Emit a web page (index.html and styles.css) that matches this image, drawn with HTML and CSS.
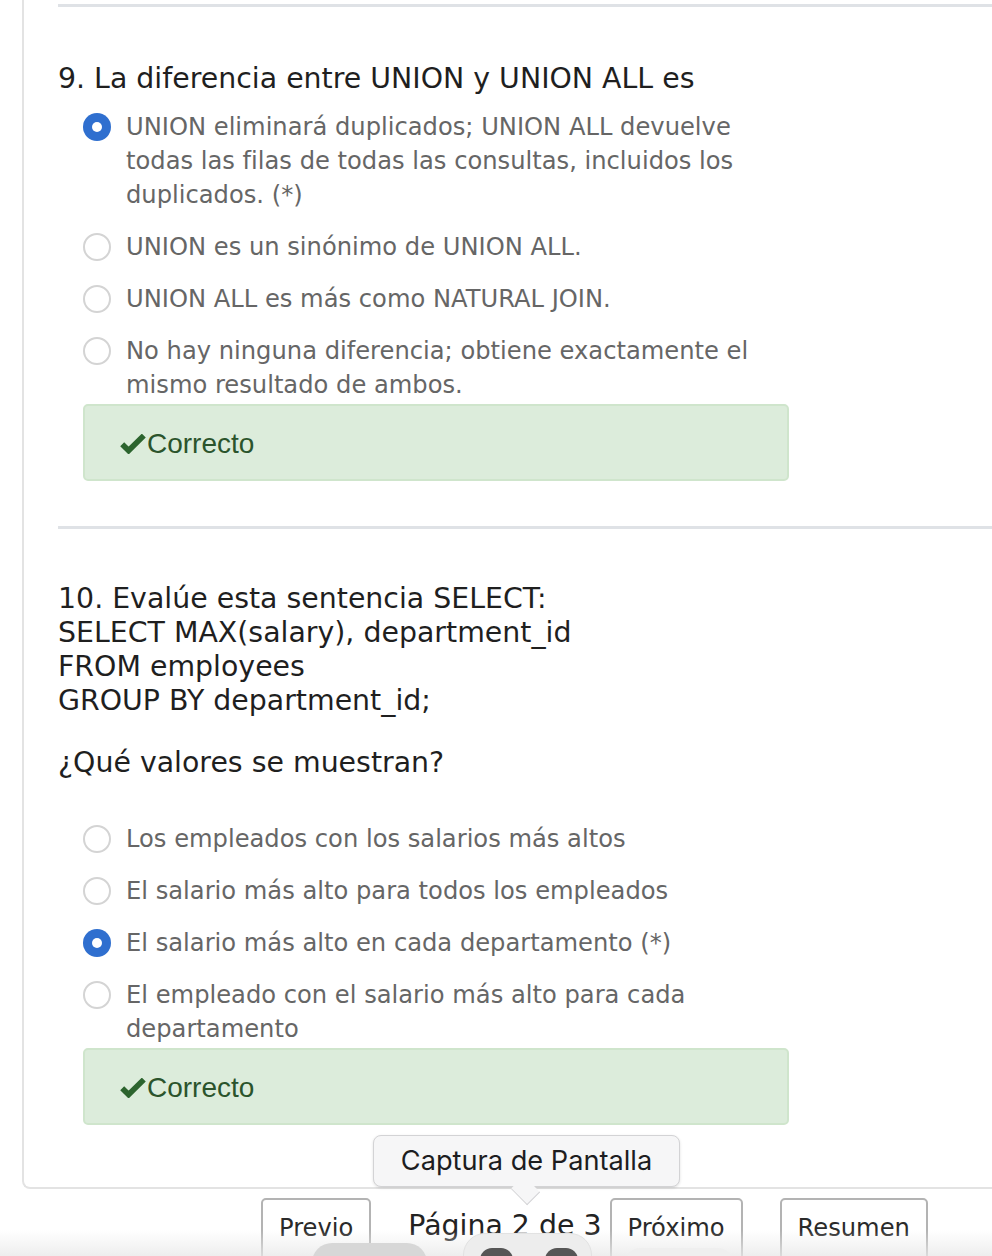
FILE: index.html
```html
<!DOCTYPE html>
<html lang="es">
<head>
<meta charset="utf-8">
<title>Examen - Página 2 de 3</title>
<link rel="stylesheet" href="styles.css">
</head>
<body>
<div class="page">
  <div class="panel">
    <hr class="rule">
    <section class="question">
      <h2 class="q-title">9. La diferencia entre UNION y UNION ALL es</h2>
      <div class="options">
        <div class="option">
          <span class="radio radio-on"></span>
          <span class="opt-text">UNION eliminará duplicados; UNION ALL devuelve todas las filas de todas las consultas, incluidos los duplicados. (*)</span>
        </div>
        <div class="option">
          <span class="radio"></span>
          <span class="opt-text">UNION es un sinónimo de UNION ALL.</span>
        </div>
        <div class="option">
          <span class="radio"></span>
          <span class="opt-text">UNION ALL es más como NATURAL JOIN.</span>
        </div>
        <div class="option">
          <span class="radio"></span>
          <span class="opt-text">No hay ninguna diferencia; obtiene exactamente el mismo resultado de ambos.</span>
        </div>
        <div class="alert">
          <svg class="check" viewBox="0 0 26 20" width="26" height="20"><path d="M2.2 10.2 L8.6 16.6 L23.8 1.6" fill="none" stroke="#2c642e" stroke-width="5.6"/></svg><span>Correcto</span>
        </div>
      </div>
    </section>
    <hr class="rule rule-mid">
    <section class="question">
      <h2 class="q-title q-title-10">10. Evalúe esta sentencia SELECT:<br>SELECT MAX(salary), department_id<br>FROM employees<br>GROUP BY department_id;</h2>
      <p class="q-sub">¿Qué valores se muestran?</p>
      <div class="options options-10">
        <div class="option">
          <span class="radio"></span>
          <span class="opt-text">Los empleados con los salarios más altos</span>
        </div>
        <div class="option">
          <span class="radio"></span>
          <span class="opt-text">El salario más alto para todos los empleados</span>
        </div>
        <div class="option">
          <span class="radio radio-on"></span>
          <span class="opt-text">El salario más alto en cada departamento (*)</span>
        </div>
        <div class="option">
          <span class="radio"></span>
          <span class="opt-text">El empleado con el salario más alto para cada departamento</span>
        </div>
        <div class="alert">
          <svg class="check" viewBox="0 0 26 20" width="26" height="20"><path d="M2.2 10.2 L8.6 16.6 L23.8 1.6" fill="none" stroke="#2c642e" stroke-width="5.6"/></svg><span>Correcto</span>
        </div>
      </div>
    </section>
  </div>
  <nav class="pager">
    <button class="btn btn-prev">Previo</button>
    <span class="page-label">Página 2 de 3</span>
    <button class="btn btn-next">Próximo</button>
    <button class="btn">Resumen</button>
  </nav>
  <div class="tooltip">Captura de Pantalla</div>
</div>
<div class="dock-shade">
  <span class="blob blob-a"></span>
  <span class="blob blob-b"><span class="key"></span><span class="key key-2"></span></span>
  <span class="blob blob-c"></span>
</div>
</body>
</html>
```

FILE: styles.css
```css
html, body {
  margin: 0;
  padding: 0;
  background: #ffffff;
}

body {
  width: 992px;
  height: 1256px;
  overflow: hidden;
  position: relative;
  font-family: "DejaVu Sans", Verdana, sans-serif;
  color: #222;
}

.page {
  position: relative;
  padding-left: 22px;
}

.panel {
  width: 1200px;
  box-sizing: border-box;
  border-left: 2px solid #e3e3e3;
  border-bottom: 2px solid #e3e3e3;
  border-bottom-left-radius: 8px;
  padding: 4px 0 62px 34px;
}

.rule {
  border: 0;
  height: 3px;
  background: #dfe2e6;
  margin: 0;
}

.rule-mid {
  margin-top: 45px;
}

.q-title {
  margin: 55px 0 0 0;
  font-size: 28.4px;
  line-height: 34px;
  font-weight: normal;
  color: #1f1f1f;
}

.q-title-10 {
  margin-top: 53px;
}

.q-sub {
  margin: 28px 0 0 0;
  font-size: 28.4px;
  line-height: 34px;
  color: #1f1f1f;
}

.options {
  margin: 14px 0 0 25px;
  width: 706px;
  display: flex;
  flex-direction: column;
  gap: 18px;
}

.options-10 {
  margin-top: 42px;
}

.option {
  display: flex;
  align-items: flex-start;
}

.radio {
  flex: none;
  width: 28px;
  height: 28px;
  margin: 3px 15px 0 0;
  box-sizing: border-box;
  border: 2px solid #d4d4d4;
  border-radius: 50%;
  background: #fff;
  position: relative;
}

.radio-on {
  border: none;
  background: #2f6fcf;
}

.radio-on::after {
  content: "";
  position: absolute;
  left: 9px;
  top: 9px;
  width: 10px;
  height: 10px;
  border-radius: 50%;
  background: #fff;
}

.opt-text {
  font-size: 24.2px;
  line-height: 34px;
  color: #666;
  width: 650px;
}

.alert {
  margin-top: -16px;
  box-sizing: border-box;
  width: 706px;
  height: 77px;
  background: #dcecdb;
  border: 2px solid #cfe5cc;
  border-radius: 5px;
  display: flex;
  align-items: center;
  padding: 3px 0 0 35px;
  font-family: "Liberation Sans", Arial, sans-serif;
  font-size: 28px;
  color: #2b542c;
}

.check {
  flex: none;
  margin-right: 1px;
  margin-top: -1px;
}

.pager {
  display: flex;
  align-items: flex-start;
  margin: 9px 0 0 239px;
}

.btn {
  font-family: "DejaVu Sans", Verdana, sans-serif;
  font-size: 24.2px;
  color: #2a2a2a;
  background: #fff;
  border: 2px solid #b3b3b3;
  border-radius: 5px;
  padding: 11px 16px 20px 16px;
  line-height: 34px;
  margin: 0;
}

.btn-prev {
  margin-right: 37px;
}

.btn-next {
  margin-right: 37px;
}

.page-label {
  font-size: 28.4px;
  line-height: 34px;
  padding-top: 11px;
  margin-right: 8px;
  color: #222;
}

.tooltip {
  position: absolute;
  left: 373px;
  top: 1135px;
  width: 307px;
  height: 52px;
  box-sizing: border-box;
  background: #f6f6f7;
  border: 1px solid #d3d3d5;
  border-radius: 8px;
  box-shadow: 0 1px 3px rgba(0, 0, 0, 0.12);
  font-family: Inter, "Liberation Sans", sans-serif;
  font-size: 27.2px;
  line-height: 50px;
  text-align: center;
  color: #1d1d1f;
}

.tooltip::after {
  content: "";
  position: absolute;
  left: 140px;
  bottom: -16px;
  width: 22px;
  height: 22px;
  background: #f6f6f7;
  border-right: 1px solid #d3d3d5;
  border-bottom: 1px solid #d3d3d5;
  transform: rotate(45deg) scaleY(0.8);
  transform-origin: center;
}

.dock-shade {
  position: absolute;
  left: 0;
  right: 0;
  bottom: 0;
  height: 26px;
  background: linear-gradient(to bottom, rgba(235, 235, 235, 0), rgba(232, 232, 232, 0.75));
  pointer-events: none;
}

.blob {
  position: absolute;
  border-radius: 22px 22px 0 0;
}

.blob-a {
  left: 312px;
  top: 13px;
  width: 115px;
  height: 20px;
  background: #d7d7d7;
}

.blob-b {
  left: 463px;
  top: 3px;
  width: 129px;
  height: 30px;
  background: #ededed;
  border: 1px solid #e2e2e2;
  box-sizing: border-box;
}

.key {
  position: absolute;
  left: 16px;
  top: 14px;
  width: 33px;
  height: 20px;
  background: #565656;
  border-radius: 12px 12px 0 0;
}

.key-2 {
  left: 81px;
}

.blob-c {
  left: 626px;
  top: 18px;
  width: 106px;
  height: 14px;
  background: #efefef;
}
```
